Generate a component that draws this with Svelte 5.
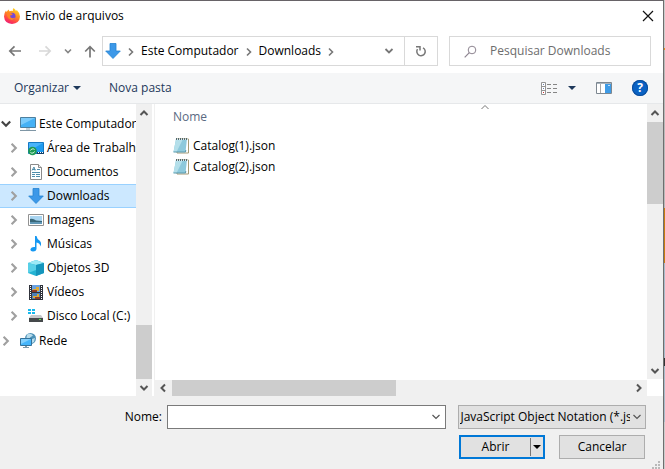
<script>
  const places = [
    { name: 'Este Computador', icon: 'pc', root: true, open: true },
    { name: 'Área de Trabalho', icon: 'desktop' },
    { name: 'Documentos', icon: 'doc' },
    { name: 'Downloads', icon: 'down', selected: true },
    { name: 'Imagens', icon: 'image' },
    { name: 'Músicas', icon: 'music' },
    { name: 'Objetos 3D', icon: 'cube' },
    { name: 'Vídeos', icon: 'video' },
    { name: 'Disco Local (C:)', icon: 'disk' },
    { name: 'Rede', icon: 'net', root: true, last: true }
  ];
  const files = ['Catalog(1).json', 'Catalog(2).json'];
  let fileName = $state('');
  let query = $state('');
</script>

{#snippet chevron(dir, color, width)}
  <svg class="chev {dir}" width="10" height="10" viewBox="0 0 10 10" aria-hidden="true">
    <path d="M1.5 3 5 6.5 8.5 3" fill="none" stroke={color} stroke-width={width} />
  </svg>
{/snippet}

{#snippet placeIcon(kind)}
  <svg class="icon" width="16" height="16" viewBox="0 0 16 16" aria-hidden="true">
    {#if kind === 'pc'}
      <path d="M0.5 1.5h15v10h-15z" fill="#45b1f5" stroke="#4d7f9e" />
      <path d="M1 2h14L1 9z" fill="#7bcbfb" />
      <path d="M6 12h4v2H6z" fill="#c5d2da" />
      <path d="M0 14h16v1H0z" fill="#7f96a5" />
    {:else if kind === 'desktop'}
      <path d="M0.500 2.500h15v11h-15z" fill="#1e9bf0" stroke="#1579c4" />
      <path d="M1 3h14L1 11z" fill="#49b4fb" />
      <path d="M9 12h7v2H9z" fill="#123f68" />
      <path d="M10 12h1v1h-1zM12 12h1v1h-1zM14 12h1v1h-1z" fill="#fff" />
      <circle cx="4.500" cy="11" r="4.300" fill="#1e9a54" />
      <path d="M2.500 10.500a2.500 2.500 0 0 1 4-1M6.500 11.500a2.500 2.500 0 0 1-4 1" fill="none" stroke="#e4fff0" />
    {:else if kind === 'doc'}
      <path d="M2.500.500h8l3 3v12h-11z" fill="#fff" stroke="#8b8b8b" />
      <path d="M10.500.500v3h3" fill="#eee" stroke="#8b8b8b" />
      <path d="M4 6.500 6 3l1 3.500M4.500 5.500h3M9 5.500h3M4 8.500h8M4 10.500h3M8 10.500h4M4 12.500h3M8 12.500h4" fill="none" stroke="#4f8dab" />
    {:else if kind === 'down'}
      <path d="M5 .500h6V8h4.300L8 15.500.700 8H5z" fill="#3c98e8" stroke="#2383d2" stroke-width=".8" />
    {:else if kind === 'image'}
      <path d="M.500 2.500h15v11h-15z" fill="#fff" stroke="#929292" />
      <path d="M2 4h12v8H2z" fill="#a9d5f1" />
      <path d="M2 7q3-1 6 1.500l6 .500v3H2z" fill="#386779" />
      <path d="M2 10h12v2H2z" fill="#6097b6" />
    {:else if kind === 'music'}
      <path d="M7 0h1.500q.5 3 3 4.500 2.500 2 1 6-.5-3.500-4-4V13q-.5 2.500-3.500 2.500-3-.5-2.500-2.500 1-2.500 4.500-2z" fill="#1598f2" />
    {:else if kind === 'cube'}
      <path d="M0 3 8 0l8 3v10l-8 3-8-3z" fill="#24b3d3" />
      <path d="M0 3 8 0l8 3-8 2z" fill="#9deaf6" />
      <path d="M8 5l8-2v10l-8 3z" fill="#1595bc" />
      <path d="M0 3l8 2v5l-8 3z" fill="#58d0e7" />
    {:else if kind === 'video'}
      <path d="M1 1h14v15H1z" fill="#30333b" />
      <path d="M4 1h8v7H4z" fill="#6aa2e2" />
      <path d="M4 9h8v6H4z" fill="#4d80b8" />
      <path d="M5 5h3V3h3v4H5zM5 12h4v-2h2v4H5z" fill="#e0aa31" />
      <path d="M4 6h5v2H4zM7 13h5v2H7z" fill="#8d3c27" />
      <path d="M2.500 2v14M13.500 2v14" stroke="#fff" stroke-dasharray="1 1" />
    {:else if kind === 'disk'}
      <path d="M0 1h3v2H0zM4 1h3v2H4zM0 4h3v2H0zM4 4h3v2H4z" fill="#16b9ee" />
      <path d="M3 7h10l2 3H1z" fill="#c6c9cb" />
      <path d="M1 10h14v4H1z" fill="#45494b" />
      <path d="M11 11h2v1h-2z" fill="#57ed4e" />
    {:else if kind === 'net'}
      <circle cx="10.500" cy="5.500" r="5.500" fill="#4d92b8" />
      <path d="M7 1.500q4-2 6 1l-3 2-1 3H6zM12 6l3-1-1 4-2 1z" fill="#b9dceb" />
      <path d="M.500 5.500h11v7H.500z" fill="#45b5fb" stroke="#34729a" />
      <path d="M1 6h10L1 11z" fill="#82d0fe" />
      <path d="M5 13h2v1h2v1H3v-1h2z" fill="#7e99a9" />
    {/if}
  </svg>
{/snippet}

<div class="screen">
  <section class="dialog" aria-label="Envio de arquivos">
    <header class="title">
      <svg width="16" height="16" viewBox="0 0 16 16" aria-hidden="true">
        <defs>
          <linearGradient id="flame" x1=".8" y1="0" x2=".3" y2="1">
            <stop offset="0" stop-color="#ffe226" />
            <stop offset=".45" stop-color="#ff8a20" />
            <stop offset=".8" stop-color="#ff3a50" />
            <stop offset="1" stop-color="#e8207c" />
          </linearGradient>
        </defs>
        <path d="M9.500 0q2 1.500 2.500 3l.8-1q3.200 3 3.200 6.500Q15.500 15.500 8 16 .5 15.500 0 8.500 0 5 2 2.500l.6 1.500Q3.500 2 5 1.500l.2 1.800q2-1 3.600-.3Q8.500 1.500 9.500 0z" fill="url(#flame)" />
        <circle cx="8" cy="8.300" r="3.500" fill="#7548d8" />
        <path d="M2.500 5q2.500-1.500 4.500.3L9 6Q7.500 7.500 6 7.500q0 2.500 2.500 2.800 2 0 3-1Q10.500 12.500 7.500 12 3 11 2.500 5z" fill="#ff8224" />
      </svg>
      <h1>Envio de arquivos</h1>
      <button class="plain close" aria-label="Fechar">
        <svg width="12" height="12" viewBox="0 0 12 12"><path d="M1 1l10 10M11 1 1 11" stroke="#111" stroke-width="1.200" /></svg>
      </button>
    </header>

    <nav class="nav">
      <div class="arrows">
        <button class="plain back" aria-label="Voltar">
          <svg width="14" height="12" viewBox="0 0 14 12"><path d="M13 6H2M6.500 1.300 1.800 6l4.700 4.700" fill="none" stroke="#777" stroke-width="1.700" /></svg>
        </button>
        <button class="plain" aria-label="Avançar">
          <svg width="14" height="12" viewBox="0 0 14 12"><path d="M1 6h11M7.500 1.300 12.200 6l-4.700 4.700" fill="none" stroke="#d8d8d8" stroke-width="1.700" /></svg>
        </button>
        <button class="plain" aria-label="Locais recentes">
          <svg width="8" height="8" viewBox="0 0 8 8"><path d="M1 2.500l3 3 3-3" fill="none" stroke="#858585" stroke-width="1.600" /></svg>
        </button>
        <button class="plain" aria-label="Acima">
          <svg width="12" height="13" viewBox="0 0 12 13"><path d="M6 12.500V2M1.200 6.500 6 1.700l4.800 4.800" fill="none" stroke="#777" stroke-width="1.700" /></svg>
        </button>
      </div>
      <div class="address">
        <div class="crumbs">
          {@render placeIcon('down')}
          {@render chevron('right', '#777', 1.6)}
          <button class="plain">Este Computador</button>
          {@render chevron('right', '#777', 1.6)}
          <button class="plain">Downloads</button>
          {@render chevron('right', '#777', 1.6)}
        </div>
        <button class="plain history" aria-label="Locais anteriores">{@render chevron('down', '#777', 1.8)}</button>
        <button class="plain refresh" aria-label="Atualizar">
          <svg width="12" height="12" viewBox="0 0 12 12"><path d="M8 2.800A4.200 4.200 0 1 1 2.500 4.200M1 1.700h4V5.500" fill="none" stroke="#777" stroke-width="1.500" /></svg>
        </button>
      </div>
      <label class="search">
        <svg width="13" height="13" viewBox="0 0 13 13" aria-hidden="true"><circle cx="8" cy="5" r="3.800" fill="none" stroke="#8d8490" /><path d="M5.300 7.700.700 12.300" stroke="#8d8490" stroke-width="1.200" /></svg>
        <input type="text" bind:value={query} placeholder="Pesquisar Downloads" aria-label="Pesquisar Downloads" />
      </label>
    </nav>

    <div class="toolbar">
      <button class="plain organize">Organizar <span class="tri"></span></button>
      <button class="plain">Nova pasta</button>
      <div class="tools">
        <button class="plain views" aria-label="Exibições">
          <svg width="17" height="13" viewBox="0 0 17 13">
            <path d="M.500.500h4v12h-4zM.500 4.500h4M.500 8.500h4" fill="#fff" stroke="#949494" />
            <path d="M2 2h1v1H2zM2 6h1v1H2z" fill="#6a7fae" /><path d="M2 10h1v1H2z" fill="#c33" />
            <path d="M6 2.500h4M12 2.500h4M6 6.500h4M12 6.500h4M6 10.500h4M12 10.500h4" stroke="#858585" />
          </svg>
          <span class="tri"></span>
        </button>
        <button class="plain" aria-label="Painel de visualização">
          <svg width="16" height="12" viewBox="0 0 16 12">
            <path d="M.500.500h15v11H.500z" fill="#fff" stroke="#7d8790" /><path d="M1 1h14v1H1z" fill="#a7b3bd" />
            <path d="M4.500 2v9" stroke="#a7a7a7" /><path d="M9 2h6v9H9z" fill="#3e9be6" /><path d="M12 3h2v1h-2z" fill="#bfe0fa" />
          </svg>
        </button>
        <button class="plain help" aria-label="Ajuda">?</button>
      </div>
    </div>

    <div class="body">
      <ul class="tree">
        {#each places as p}
          <li class:root={p.root} class:selected={p.selected} class:last={p.last}>
            {@render chevron(p.open ? 'down' : 'right', p.open ? '#444' : '#a0a0a0', 1.8)}
            {@render placeIcon(p.icon)}
            <button class="plain">{p.name}</button>
          </li>
        {/each}
      </ul>
      <div class="vbar side">
        {@render chevron('up', '#555', 2)}
        <div class="track"><div class="thumb"></div></div>
        {@render chevron('down', '#555', 2)}
      </div>
      <div class="files">
        <div class="list">
          <table>
            <thead>
              <tr><th>Nome<span class="sort">{@render chevron('up', '#777', 1)}</span></th></tr>
            </thead>
            <tbody>
              {#each files as f}
                <tr>
                  <td>
                    <div class="file">
                      <svg width="16" height="17" viewBox="0 0 16 17" aria-hidden="true">
                        <path d="M4 2h11.500v14H4z" fill="#fff" stroke="#a59a76" />
                        <path d="M3 2h11l-1.500 13H.500z" fill="#8dc9dc" />
                        <path d="M3 2h7L3.500 15h-3z" fill="#b4dfea" />
                        <path d="M.500 15h12l.3-2" fill="none" stroke="#5999ad" />
                        <path d="M3 2.500h12" stroke="#dcebef" />
                        <path d="M3.500 1v2M5.500 1v2M7.500 1v2M9.500 1v2M11.500 1v2M13.500 1v2" stroke="#506970" />
                      </svg>
                      {f}
                    </div>
                  </td>
                </tr>
              {/each}
            </tbody>
          </table>
        </div>
        <div class="hbar">
          {@render chevron('left', '#555', 2)}
          <div class="track"><div class="thumb"></div></div>
          {@render chevron('right', '#555', 2)}
        </div>
      </div>
      <div class="vbar main">
        {@render chevron('up', '#555', 2)}
        <div class="track"><div class="thumb"></div></div>
        {@render chevron('down', '#555', 2)}
      </div>
    </div>

    <footer>
      <div class="row">
        <label for="name">Nome:</label>
        <div class="combo">
          <input id="name" type="text" bind:value={fileName} />
          <button class="plain" aria-label="Mostrar nomes">{@render chevron('down', '#555', 1.2)}</button>
        </div>
        <div class="type">
          <select aria-label="Tipo de arquivo"><option>JavaScript Object Notation (*.json)</option></select>
          {@render chevron('down', '#555', 1.2)}
        </div>
      </div>
      <div class="row actions">
        <div class="split">
          <button class="plain open">Abrir</button>
          <button class="plain more" aria-label="Mais opções"><span class="tri"></span></button>
        </div>
        <button class="cancel">Cancelar</button>
      </div>
      <svg class="grip" width="10" height="8" viewBox="0 0 10 8" aria-hidden="true">
        <path d="M6 0h2v2H6zM3 3h2v2H3zM6 3h2v2H6zM0 6h2v2H0zM3 6h2v2H3zM6 6h2v2H6z" fill="#b9b9b9" />
      </svg>
    </footer>
  </section>
</div>

<style>
  .screen {
    box-sizing: border-box;
    min-height: 100vh;
    display: flex;
    padding-right: 1px;
    background: linear-gradient(#ccc 0 48px, #e08a1c 48px 50px, #b9b9b9 50px 208px, #c87c10 208px 263px, #a9bccb 263px 358px, #333 358px 366px, #a9bccb 366px 422px, #ccc 422px);
    font: 12px/16px "Segoe UI", "Open Sans", "Noto Sans", sans-serif;
    color: #000;
  }
  .dialog {
    flex: 1;
    min-width: 0;
    display: flex;
    flex-direction: column;
    background: #fff;
    border-top: 1px solid #676367;
    border-right: 1px solid #6e6e6e;
  }
  svg { display: block; flex: none; }
  .plain {
    border: 0;
    padding: 0;
    background: none;
    font: inherit;
    color: inherit;
    white-space: nowrap;
  }
  .right { transform: rotate(-90deg); }
  .left { transform: rotate(90deg); }
  .up { transform: rotate(180deg); }
  .tri {
    display: inline-block;
    border: 4px solid transparent;
    border-top-color: #1e395b;
    border-bottom: 0;
  }

  .title {
    display: flex;
    align-items: center;
    gap: 5px;
    height: 30px;
    padding: 0 9px 0 4px;
  }
  h1 { flex: 1; margin: 0; font: inherit; }

  .nav { display: flex; align-items: center; padding: 5px 12px 7px 8px; }
  .arrows { flex: none; display: flex; align-items: center; gap: 12px; width: 94px; }
  .back { padding-right: 4px; }
  .address {
    box-sizing: border-box;
    flex: 334 0 0;
    display: flex;
    height: 30px;
    border: 1px solid #d9d9d9;
  }
  .crumbs { flex: 1; display: flex; align-items: center; gap: 5px; padding-left: 2px; }
  .crumbs .chev { margin-top: 1px; }
  .history { padding: 0 10px; }
  .refresh { width: 33px; border-left: 1px solid #d9d9d9; display: grid; place-items: center; }
  .search {
    box-sizing: border-box;
    flex: 186 0 0;
    display: flex;
    align-items: center;
    gap: 13px;
    height: 30px;
    margin-left: 11px;
    padding-left: 14px;
    border: 1px solid #d9d9d9;
  }
  input {
    flex: 1;
    min-width: 0;
    border: 0;
    padding: 0;
    outline: 0;
    background: none;
    font: inherit;
  }
  input::placeholder { color: #6d6d6d; opacity: 1; }

  .toolbar {
    display: flex;
    align-items: center;
    gap: 28px;
    height: 30px;
    padding: 0 15px 0 14px;
    background: #f5f6f7;
    border-bottom: 1px solid #e6e8ea;
    color: #1e395b;
  }
  .organize, .views { display: flex; align-items: center; }
  .organize { gap: 4px; }
  .views { gap: 10px; }
  .tools { display: flex; align-items: center; gap: 20px; margin-left: auto; }
  .help {
    width: 16px;
    height: 16px;
    border-radius: 8px;
    background: #0a62c4;
    box-shadow: inset 0 0 0 1px #0b4c99;
    color: #fff;
    font-weight: 700;
    text-align: center;
  }

  .body { flex: 1; display: flex; min-height: 0; }
  .tree {
    flex: none;
    width: 136px;
    margin: 0;
    padding: 8px 0 0;
    list-style: none;
    overflow: hidden;
  }
  li {
    box-sizing: border-box;
    display: flex;
    align-items: center;
    gap: 3px;
    height: 24px;
    padding-left: 8px;
    border: 1px solid transparent;
    border-left: 0;
    border-right: 0;
    overflow: hidden;
  }
  li :global(.chev) { width: 12px; height: 12px; }
  li .icon { margin-left: 5px; }
  li.root { padding-left: 0; }
  li.last { margin-top: 1px; }
  li.selected { background: #cce8ff; border-color: #99d1ff; }

  .vbar { flex: none; display: flex; flex-direction: column; align-items: center; gap: 4px; background: #f0f0f0; padding: 4px 0 3px; width: 16px; }
  .track { flex: 1; display: flex; }
  .vbar .track { width: 100%; flex-direction: column; }
  .thumb { background: #cdcdcd; }
  .side .track { justify-content: flex-end; }
  .side .thumb { height: 21%; }
  .main .thumb { height: 34%; }
  .side { margin-right: 2px; }
  .files { flex: 1; min-width: 0; display: flex; flex-direction: column; border-left: 1px solid #f0f0f0; }
  .list { flex: 1; overflow: hidden; }
  table { width: 132%; border-collapse: collapse; }
  th {
    position: relative;
    height: 26px;
    padding: 0 0 0 18px;
    text-align: left;
    font-weight: 400;
    color: #5a6a82;
  }
  thead::after { content: ""; display: block; height: 5px; }
  .sort { position: absolute; top: -2px; left: 50%; }
  td { height: 21px; padding: 0 0 0 18px; }
  .file { display: flex; align-items: center; gap: 4px; }
  .hbar { display: flex; align-items: center; gap: 4px; height: 16px; padding: 0 3px; background: #f0f0f0; }
  .hbar .track { height: 100%; }
  .hbar .thumb { width: 49%; }
  .main { margin-bottom: 17px; }

  footer { position: relative; padding: 9px 17px 10px 0; background: #f0f0f0; }
  .row { display: flex; align-items: center; }
  .row label { width: 162px; text-align: right; margin-right: 5px; }
  .combo {
    flex: 278;
    display: flex;
    height: 22px;
    border: 1px solid #7a7a7a;
    background: #fff;
  }
  .combo input { padding-left: 4px; }
  .combo .plain { padding: 0 4px; }
  .type { flex: 188; position: relative; margin-left: 12px; min-width: 0; }
  .type .chev { position: absolute; top: 7px; right: 4px; pointer-events: none; }
  select {
    appearance: none;
    display: block;
    width: 100%;
    height: 24px;
    padding: 0 15px 0 1px;
    border: 1px solid #adadad;
    border-radius: 0;
    background: #e1e1e1;
    font: inherit;
    color: #000;
  }
  .actions { justify-content: flex-end; gap: 14px; margin-top: 6px; padding-right: 1px; }
  .split {
    box-sizing: border-box;
    display: flex;
    align-items: center;
    width: 86px;
    height: 24px;
    border: 2px solid #0078d7;
    background: #e1e1e1;
  }
  .open { flex: 1; }
  .more { height: 18px; width: 13px; border-left: 1px solid #777; display: grid; place-items: center; }
  .more .tri { border-top-color: #000; }
  .cancel {
    width: 86px;
    height: 24px;
    padding: 0;
    border: 1px solid #adadad;
    background: #e1e1e1;
    font: inherit;
    color: #000;
  }
  .grip { position: absolute; right: 1px; bottom: 0; }
</style>
